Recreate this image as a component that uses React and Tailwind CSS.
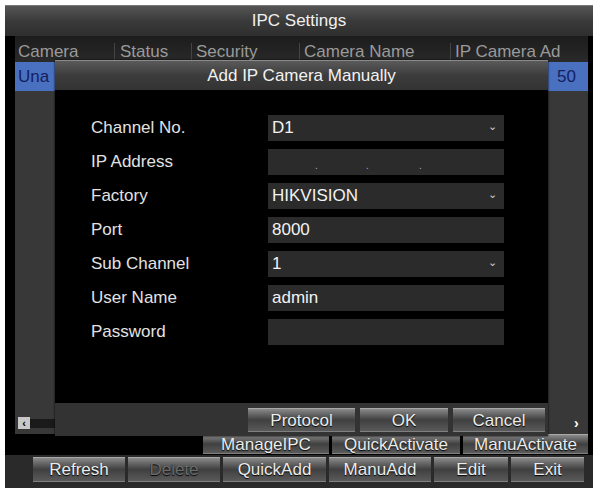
import React from 'react';

const font = { fontFamily: '"Liberation Sans", Arial, sans-serif' };

const Btn = ({ label, w, dim }) => (
  <div
    className={`h-full flex items-center justify-center border-t border-[#a8a8a8] border-b border-b-[#808080] bg-gradient-to-b from-[#8a8a8a] via-[#404040] to-[#5a5a5a] text-[17px] leading-none ${dim ? 'text-[#6a6a6a]' : 'text-[#ececec]'} [text-shadow:0_1px_1px_#000]`}
    style={{ width: w }}
  >
    {label}
  </div>
);

const Field = ({ label, value, select, ip }) => (
  <div className="flex items-center h-[26px]">
    <div className="w-[177px] text-[17px] text-[#e2e2e2]">{label}</div>
    <div className="w-[236px] h-full bg-[#2b2b2b] flex items-center px-[4px] text-[17px] text-[#f2f2f2] relative">
      {ip ? (
        <>
          <span className="absolute left-[47px] top-[9px] text-[10px] text-[#aaa]">.</span>
          <span className="absolute left-[98px] top-[9px] text-[10px] text-[#aaa]">.</span>
          <span className="absolute left-[151px] top-[9px] text-[10px] text-[#aaa]">.</span>
        </>
      ) : (
        <span>{value}</span>
      )}
      {select && <span className="absolute right-[7px] top-[3px] text-[11px] text-[#ccc]">⌄</span>}
    </div>
  </div>
);

export default function App() {
  return (
    <div className="w-[598px] h-[493px] bg-white pt-[5px] pl-[5px] overflow-hidden" style={font}>
      <div className="w-[588px] h-[483px] bg-[#2a2a2a] flex flex-col relative">
        {/* title */}
        <div className="h-[31px] flex items-center justify-center bg-gradient-to-b from-[#555] via-[#3a3a3a] to-[#2e2e2e] border-t border-[#777] text-[17px] text-[#f0f0f0]">
          IPC Settings
        </div>

        {/* table area */}
        <div className="flex h-[419px] bg-black">
          <div className="w-[10px]" />
          <div className="flex-1 flex flex-col">
            <div className="h-[26px] flex items-end pb-[2px] bg-gradient-to-b from-[#1c1c1c] to-[#2a2a2a] text-[17px] text-[#9a9a9a] leading-none">
              <div className="w-[100px] pl-[3px] border-r border-[#444]">Camera</div>
              <div className="w-[77px] pl-[5px] border-r border-[#444]">Status</div>
              <div className="w-[108px] pl-[4px] border-r border-[#444]">Security</div>
              <div className="w-[151px] pl-[4px] border-r border-[#444]">Camera Name</div>
              <div className="flex-1 pl-[4px] whitespace-nowrap overflow-hidden">IP Camera Ad</div>
            </div>
            <div className="h-[29px] flex items-center justify-between bg-[#4a70c0] text-[17px] text-[#152060]">
              <span className="pl-[3px]">Una</span>
              <span className="pr-[12px]">50</span>
            </div>
            <div className="flex-1 bg-[#383838] flex flex-col justify-end">
              <div className="h-[14px] mb-[4px] flex items-center">
                <div className="w-[12px] h-[12px] ml-[3px] bg-[#c8c8c8] text-[#000] text-[11px] leading-none flex items-center justify-center font-bold">‹</div>
                <div className="w-[25px] h-[9px] bg-[#1a1a1a]" />
                <div className="flex-1" />
                <div className="w-[10px] mr-[4px] text-[14px] text-white font-bold leading-none">›</div>
              </div>
            </div>
            <div className="h-[21px] flex justify-end gap-[3px] pb-[1px] bg-black">
              <Btn label="ManageIPC" w="126px" />
              <Btn label="QuickActivate" w="128px" />
              <Btn label="ManuActivate" w="125px" />
            </div>
          </div>
          <div className="w-[5px]" />
        </div>

        {/* bottom buttons */}
        <div className="h-[33px] flex gap-[3px] pl-[28px] pt-[2px] pb-[6px]">
          <Btn label="Refresh" w="92px" />
          <Btn label="Delete" w="92px" dim />
          <Btn label="QuickAdd" w="103px" />
          <Btn label="ManuAdd" w="102px" />
          <Btn label="Edit" w="74px" />
          <Btn label="Exit" w="73px" />
        </div>

        {/* dialog */}
        <div className="absolute left-[50px] top-[55px] w-[493px] h-[376px] flex flex-col bg-black shadow-[0_0_2px_#000]">
          <div className="h-[30px] flex items-center justify-center bg-gradient-to-b from-[#5a5a5a] via-[#3c3c3c] to-[#333] border-t border-[#8a8a8a] text-[17px] text-[#f2f2f2]">
            Add IP Camera Manually
          </div>
          <div className="flex-1 flex flex-col gap-[8px] pl-[36px] pt-[25px]">
            <Field label="Channel No." value="D1" select />
            <Field label="IP Address" ip />
            <Field label="Factory" value="HIKVISION" select />
            <Field label="Port" value="8000" />
            <Field label="Sub Channel" value="1" select />
            <Field label="User Name" value="admin" />
            <Field label="Password" value="" />
          </div>
          <div className="h-[33px] bg-[#333] flex justify-end gap-[5px] pr-[3px] pt-[5px] pb-[4px]">
            <Btn label="Protocol" w="107px" />
            <Btn label="OK" w="88px" />
            <Btn label="Cancel" w="92px" />
          </div>
        </div>
      </div>
    </div>
  );
}
